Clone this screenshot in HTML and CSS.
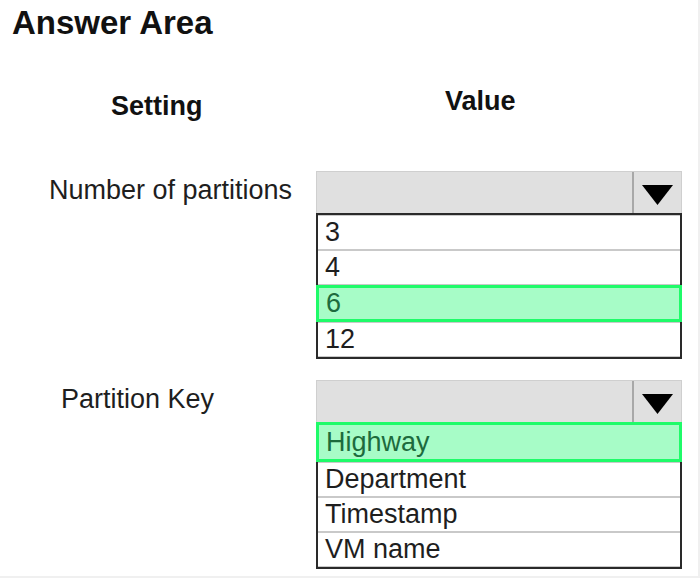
FILE: index.html
```html
<!DOCTYPE html>
<html lang="en">
<head>
    <meta charset="UTF-8">
    <meta name="viewport" content="width=device-width, initial-scale=1.0">
    <title>Answer Area</title>
    <link rel="stylesheet" href="styles.css">
</head>
<body>

<div class="page">
    <h1>Answer Area</h1>

    <div class="grid head">
        <div class="head-setting">Setting</div>
        <div class="head-value">Value</div>
    </div>

    <div class="grid row">
        <div class="label label-partitions">Number of partitions</div>
        <div class="field">
            <div class="select">
                <div class="select-box"></div>
                <div class="select-btn">
                    <svg width="31" height="20" viewBox="0 0 31 20"><polygon points="0,0 31,0 15.5,20" fill="#000"/></svg>
                </div>
            </div>
            <div class="options">
                <div class="option">3</div>
                <div class="option">4</div>
                <div class="option selected">6</div>
                <div class="option">12</div>
            </div>
        </div>
    </div>

    <div class="grid row second">
        <div class="label label-key">Partition Key</div>
        <div class="field">
            <div class="select">
                <div class="select-box"></div>
                <div class="select-btn">
                    <svg width="31" height="20" viewBox="0 0 31 20"><polygon points="0,0 31,0 15.5,20" fill="#000"/></svg>
                </div>
            </div>
            <div class="options">
                <div class="option selected first">Highway</div>
                <div class="option">Department</div>
                <div class="option">Timestamp</div>
                <div class="option">VM name</div>
            </div>
        </div>
    </div>
</div>

</body>
</html>
```

FILE: styles.css
```css
body {
    margin: 0;
    background: #fff;
    font-family: "Liberation Sans", Arial, sans-serif;
    color: #1e1e1e;
}

.page {
    width: 698px;
    height: 576px;
    border-right: 2px solid #f0f0f0;
    border-bottom: 2px solid #f0f0f0;
    overflow: hidden;
}

h1 {
    margin: 4px 0 0 12px;
    font-size: 33px;
    font-weight: bold;
    line-height: 38px;
    color: #111;
}

.grid {
    display: grid;
    grid-template-columns: 316px 366px;
    align-items: start;
}

.head {
    margin-top: 44px;
    font-size: 27px;
    font-weight: bold;
    color: #111;
}

.head-setting {
    padding: 5px 0 0 111px;
}

.head-value {
    padding-left: 129px;
}

.row {
    margin-top: 49px;
}

.row.second {
    margin-top: 21px;
}

.label {
    font-size: 27px;
    padding-top: 4px;
}

.label-partitions {
    padding-left: 49px;
}

.label-key {
    padding-left: 61px;
}

.select {
    display: flex;
    height: 42px;
    box-sizing: border-box;
    background: #e0e0e0;
    border: 1px solid #cfcfcf;
    border-bottom: none;
}

.select-box {
    flex: 1;
}

.select-btn {
    width: 49px;
    border-left: 2px solid #a8a8a8;
    display: flex;
    justify-content: center;
    align-items: center;
    padding-top: 4px;
    box-sizing: border-box;
}

.options {
    border: 2px solid #2a2a2a;
    background: #fff;
}

.option {
    height: 35px;
    box-sizing: border-box;
    border-top: 1px solid #c9c9c9;
    border-bottom: 1px solid #c9c9c9;
    display: flex;
    align-items: center;
    padding-left: 7px;
    font-size: 27px;
    color: #1e1e1e;
}

.option.selected {
    height: 37px;
    margin: 0 -2px;
    border: 3px solid #1ffb69;
    background: #a7fcc7;
    color: #1d6b3d;
    padding-left: 7px;
}

.option.selected.first {
    margin-top: -2px;
    height: 40px;
}
```
